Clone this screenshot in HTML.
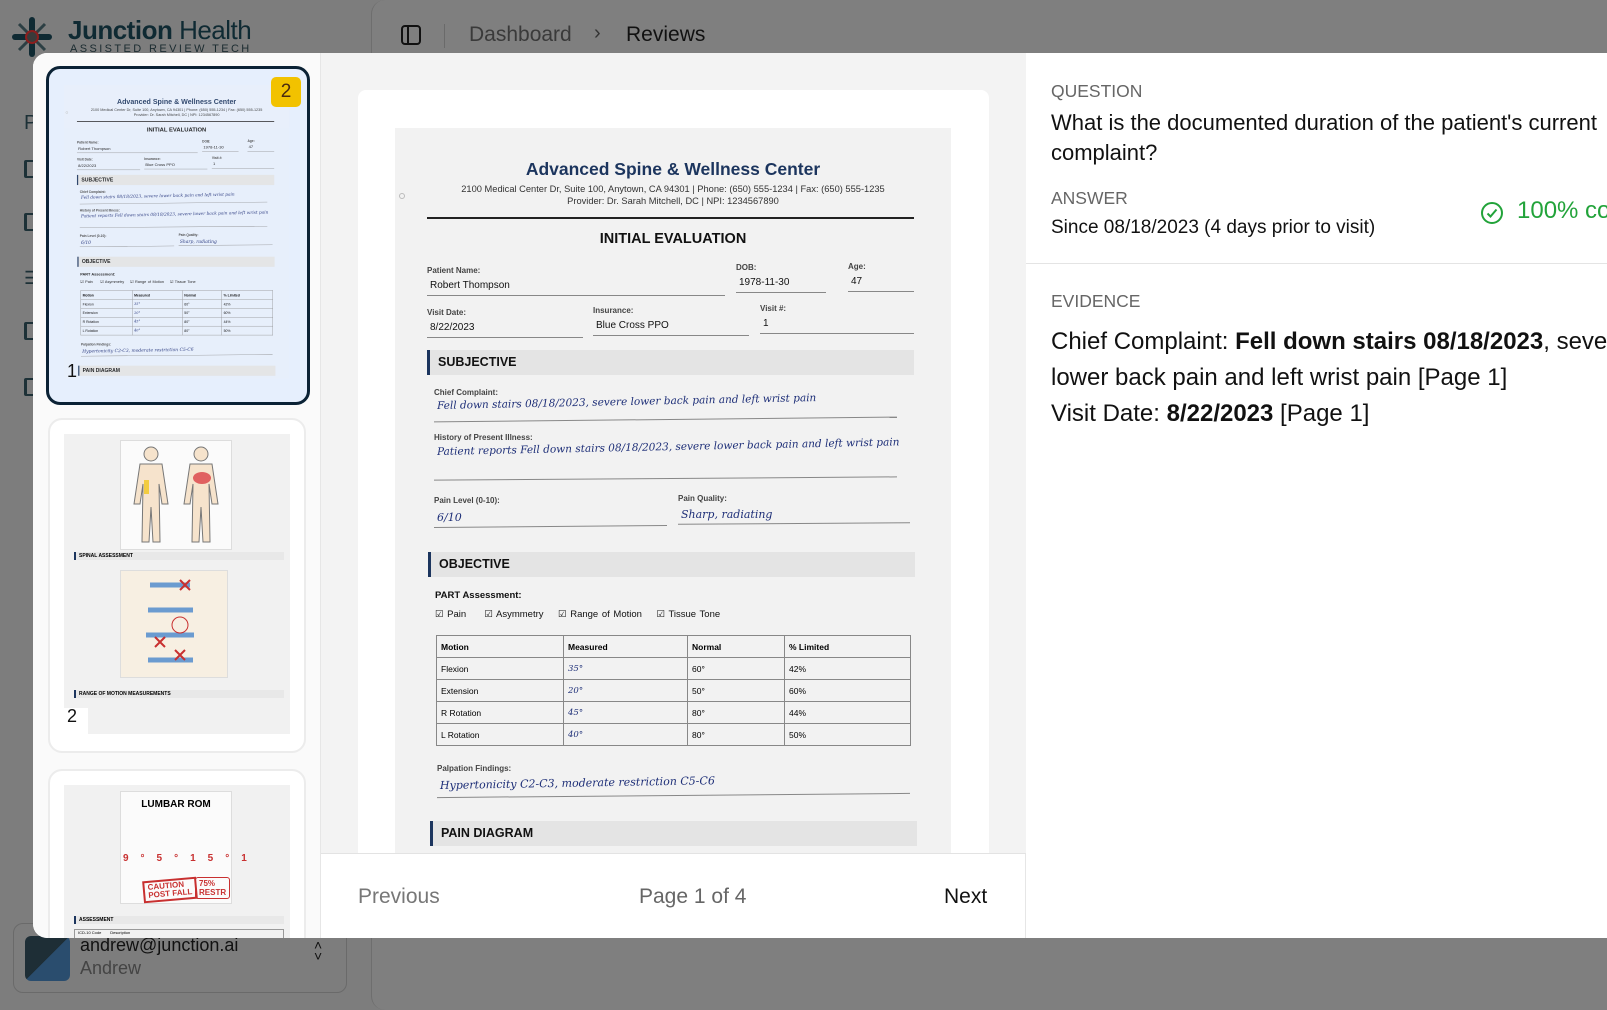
<!DOCTYPE html>
<html><head><meta charset="utf-8"><style>
*{box-sizing:border-box;margin:0;padding:0}
body{width:1607px;height:1002px;overflow:hidden;background:#7d7d7d;font-family:"Liberation Sans",Arial,sans-serif;position:relative}
.abs{position:absolute}
.hw{font-family:"DejaVu Serif",serif;font-style:italic;color:#1e2f78;white-space:nowrap}
.lbl{font-size:8px;font-weight:bold;color:#444;white-space:nowrap}
.val{font-size:10px;color:#111;white-space:nowrap}
.ln{height:1px;background:#888}
.bar{background:#e4e4e4;border-left:3px solid #1c355e;font-weight:bold;font-size:12.5px;padding-left:8px;line-height:25px;color:#111}
.scan{position:absolute;width:556px;height:725px;background:#f2f2f2;overflow:hidden}
table{border-collapse:collapse;font-size:8.5px}
td{border:1px solid #888;height:22px;padding:0 4px;vertical-align:middle}
.si{position:absolute;left:24px;width:12px;height:18px;border:2px solid #1d3137;border-radius:2px;border-left-width:3px}
</style></head><body>
<!-- background app -->
<div class="abs" style="left:371px;top:0;width:1300px;height:1010px;border-left:1px solid #6e6e6e;border-radius:14px;background:#7f7f7f"></div>
<svg class="abs" style="left:12px;top:17px" width="40" height="40" viewBox="0 0 40 40">
<g stroke="#0f2a33" stroke-width="6" stroke-linecap="round"><line x1="20" y1="3" x2="20" y2="37"/><line x1="3" y1="20" x2="37" y2="20"/></g>
<g stroke="#2c3f44" stroke-width="3"><line x1="7" y1="7" x2="33" y2="33"/><line x1="33" y1="7" x2="7" y2="33"/></g>
<circle cx="20" cy="20" r="6" fill="#3a3a3a" stroke="#8b1e1e" stroke-width="2"/></svg>
<div class="abs" style="left:68px;top:15px;font-size:26px;font-weight:bold;color:#0f2a33;letter-spacing:-0.5px">Junction<span style="font-weight:normal"> Health</span></div>
<div class="abs" style="left:70px;top:43px;font-size:11px;color:#1b2b30;letter-spacing:2.4px">ASSISTED REVIEW TECH</div>
<div class="abs" style="left:24px;top:112px;font-size:20px;color:#1d3137">P</div>
<div class="si" style="top:160px"></div><div class="si" style="top:213px"></div><div class="si" style="top:322px"></div><div class="si" style="top:378px"></div>
<div class="abs" style="left:24px;top:268px;font-size:18px;color:#1d3137">☰</div>
<svg class="abs" style="left:400px;top:24px" width="22" height="22" viewBox="0 0 22 22" fill="none" stroke="#111" stroke-width="2"><rect x="2" y="2" width="18" height="18" rx="3"/><line x1="8" y1="2" x2="8" y2="20"/></svg>
<div class="abs" style="left:444px;top:24px;width:1px;height:24px;background:#6a6a6a"></div>
<div class="abs" style="left:469px;top:23px;font-size:21px;color:#3a3a3a">Dashboard</div>
<div class="abs" style="left:594px;top:22px;font-size:20px;color:#333">›</div>
<div class="abs" style="left:626px;top:23px;font-size:21px;color:#111">Reviews</div>
<div class="abs" style="left:13px;top:923px;width:334px;height:70px;border:1px solid #6a6a6a;border-radius:10px"></div>
<div class="abs" style="left:25px;top:936px;width:45px;height:45px;border-radius:6px;background:linear-gradient(135deg,#1e2e36 50%,#2a4d6e 50%)"></div>
<div class="abs" style="left:80px;top:935px;font-size:18px;color:#111">andrew@junction.ai</div>
<div class="abs" style="left:80px;top:958px;font-size:18px;color:#444">Andrew</div>
<div class="abs" style="left:314px;top:940px;font-size:14px;color:#111;line-height:11px">˄<br>˅</div>

<!-- modal -->
<div class="abs" style="left:33px;top:53px;width:1600px;height:885px;background:#fff;border-radius:14px;overflow:hidden">
 <div class="abs" style="left:0;top:0;width:288px;height:885px;background:#fafafa;border-right:1px solid #e6e6e6"></div>
 <div class="abs" style="left:288px;top:0;width:705px;height:800px;background:#f3f3f3"></div>
 <div class="abs" style="left:325px;top:37px;width:631px;height:780px;background:#fff;border-radius:8px"></div>
 <div class="abs" style="left:288px;top:800px;width:705px;height:85px;background:#fff;border-top:1px solid #e3e3e3;border-right:1px solid #e6e6e6"></div>
 <div class="abs" style="left:325px;top:832px;font-size:21px;color:#777">Previous</div>
 <div class="abs" style="left:606px;top:832px;font-size:21px;color:#666">Page 1 of 4</div>
 <div class="abs" style="left:911px;top:832px;font-size:21px;color:#111">Next</div>
 <div class="abs" style="left:993px;top:210px;width:700px;height:1px;background:#e4e4e4"></div>
 <div class="abs" style="left:1018px;top:28px;font-size:17.5px;color:#666">QUESTION</div>
 <div class="abs" style="left:1018px;top:55px;font-size:22px;color:#111;line-height:30px;white-space:nowrap">What is the documented duration of the patient's current<br>complaint?</div>
 <div class="abs" style="left:1018px;top:135px;font-size:17.5px;color:#666">ANSWER</div>
 <div class="abs" style="left:1018px;top:164px;font-size:19px;color:#111">Since 08/18/2023 (4 days prior to visit)</div>
 <svg class="abs" style="left:1447px;top:148px" width="24" height="24" viewBox="0 0 24 24" fill="none" stroke="#22a33a" stroke-width="2"><circle cx="12" cy="12" r="10"/><path d="M7.5 12.5l3 3 6-7"/></svg>
 <div class="abs" style="left:1484px;top:144px;font-size:24px;color:#22a33a;white-space:nowrap">100% confidence</div>
 <div class="abs" style="left:1018px;top:238px;font-size:17.5px;color:#666">EVIDENCE</div>
 <div class="abs" style="left:1018px;top:271px;font-size:24px;color:#111;line-height:36px;white-space:nowrap">Chief Complaint: <b>Fell down stairs 08/18/2023</b>, severe<br>lower back pain and left wrist pain [Page 1]<br>Visit Date: <b>8/22/2023</b> [Page 1]</div>
</div>

<!-- main scan -->
<div id="scan" class="scan" style="left:395px;top:128px">
 <div class="abs" style="left:0;top:31px;width:556px;text-align:center;font-size:17.5px;font-weight:bold;color:#1c355e">Advanced Spine &amp; Wellness Center</div>
 <div class="abs" style="left:0;top:55px;width:556px;text-align:center;font-size:9.3px;color:#333;line-height:12px">2100 Medical Center Dr, Suite 100, Anytown, CA 94301 | Phone: (650) 555-1234 | Fax: (650) 555-1235<br>Provider: Dr. Sarah Mitchell, DC | NPI: 1234567890</div>
 <div class="abs" style="left:4px;top:65px;width:6px;height:6px;border:1px solid #bbb;border-radius:50%"></div>
 <div class="abs" style="left:32px;top:89px;width:487px;height:2px;background:#222"></div>
 <div class="abs" style="left:0;top:103px;width:556px;text-align:center;font-size:14.5px;font-weight:bold;color:#111">INITIAL EVALUATION</div>
 <div class="abs lbl" style="left:32px;top:138px">Patient Name:</div>
 <div class="abs val" style="left:35px;top:152px">Robert Thompson</div>
 <div class="abs ln" style="left:32px;top:167px;width:298px"></div>
 <div class="abs lbl" style="left:341px;top:135px">DOB:</div>
 <div class="abs val" style="left:344px;top:149px">1978-11-30</div>
 <div class="abs ln" style="left:341px;top:164px;width:90px"></div>
 <div class="abs lbl" style="left:453px;top:134px">Age:</div>
 <div class="abs val" style="left:456px;top:148px">47</div>
 <div class="abs ln" style="left:453px;top:163px;width:66px"></div>
 <div class="abs lbl" style="left:32px;top:180px">Visit Date:</div>
 <div class="abs val" style="left:35px;top:194px">8/22/2023</div>
 <div class="abs ln" style="left:32px;top:209px;width:156px"></div>
 <div class="abs lbl" style="left:198px;top:178px">Insurance:</div>
 <div class="abs val" style="left:201px;top:192px">Blue Cross PPO</div>
 <div class="abs ln" style="left:198px;top:207px;width:156px"></div>
 <div class="abs lbl" style="left:365px;top:176px">Visit #:</div>
 <div class="abs val" style="left:368px;top:190px">1</div>
 <div class="abs ln" style="left:365px;top:205px;width:154px"></div>
 <div class="abs bar" style="left:32px;top:222px;width:487px">SUBJECTIVE</div>
 <div class="abs lbl" style="left:39px;top:260px">Chief Complaint:</div>
 <div class="abs hw" style="left:42px;top:272px;font-size:10.5px;transform:rotate(-1.2deg);transform-origin:left">Fell down stairs 08/18/2023, severe lower back pain and left wrist pain</div>
 <div class="abs ln" style="left:39px;top:291px;width:463px;transform:rotate(-0.6deg)"></div>
 <div class="abs lbl" style="left:39px;top:305px">History of Present Illness:</div>
 <div class="abs hw" style="left:42px;top:318px;font-size:10.5px;transform:rotate(-1.2deg);transform-origin:left">Patient reports Fell down stairs 08/18/2023, severe lower back pain and left wrist pain</div>
 <div class="abs ln" style="left:39px;top:350px;width:463px;transform:rotate(-0.4deg)"></div>
 <div class="abs lbl" style="left:39px;top:368px">Pain Level (0-10):</div>
 <div class="abs hw" style="left:42px;top:383px;font-size:11px">6/10</div>
 <div class="abs ln" style="left:39px;top:398px;width:233px;transform:rotate(-0.5deg)"></div>
 <div class="abs lbl" style="left:283px;top:366px">Pain Quality:</div>
 <div class="abs hw" style="left:286px;top:380px;font-size:11px">Sharp, radiating</div>
 <div class="abs ln" style="left:283px;top:395px;width:232px;transform:rotate(-0.4deg)"></div>
 <div class="abs bar" style="left:33px;top:424px;width:487px">OBJECTIVE</div>
 <div class="abs" style="left:40px;top:462px;font-size:9.5px;font-weight:bold;color:#111">PART Assessment:</div>
 <div class="abs" style="left:40px;top:481px;font-size:9.5px;color:#111;white-space:nowrap;word-spacing:1px">☑ Pain &nbsp;&nbsp;&nbsp;&nbsp;☑ Asymmetry &nbsp;&nbsp;&nbsp;☑ Range of Motion &nbsp;&nbsp;&nbsp;☑ Tissue Tone</div>
 <table class="abs" style="left:41px;top:507px;width:475px">
  <tr style="font-weight:bold"><td style="width:127px">Motion</td><td style="width:124px">Measured</td><td style="width:97px">Normal</td><td>% Limited</td></tr>
  <tr><td>Flexion</td><td class="hw">35°</td><td>60°</td><td>42%</td></tr>
  <tr><td>Extension</td><td class="hw">20°</td><td>50°</td><td>60%</td></tr>
  <tr><td>R Rotation</td><td class="hw">45°</td><td>80°</td><td>44%</td></tr>
  <tr><td>L Rotation</td><td class="hw">40°</td><td>80°</td><td>50%</td></tr>
 </table>
 <div class="abs lbl" style="left:42px;top:636px">Palpation Findings:</div>
 <div class="abs hw" style="left:45px;top:651px;font-size:11px;transform:rotate(-1deg);transform-origin:left">Hypertonicity C2-C3, moderate restriction C5-C6</div>
 <div class="abs ln" style="left:42px;top:667px;width:473px;transform:rotate(-0.5deg)"></div>
 <div class="abs bar" style="left:35px;top:693px;width:487px">PAIN DIAGRAM</div>
</div>

<!-- thumbnails -->
<div class="abs" style="left:46px;top:66px;width:264px;height:339px;border:3px solid #0b2235;border-radius:14px;background:#e6effd;overflow:hidden">
 <div id="t1" style="position:absolute;left:15px;top:16px;width:556px;height:725px;transform:scale(0.405);transform-origin:0 0;opacity:0.9"></div>
 <div class="abs" style="left:222px;top:8px;width:30px;height:30px;border-radius:5px;background:#f2c200;text-align:center;font-size:19px;line-height:30px;color:#4a2a10">2</div>
 <div class="abs" style="left:18px;top:292px;font-size:18px;color:#111">1</div>
</div>
<div class="abs" style="left:48px;top:418px;width:258px;height:335px;border:2px solid #ececec;border-radius:14px;background:#fff;overflow:hidden">
 <div class="abs" style="left:14px;top:14px;width:226px;height:300px;background:#f1f1f1"></div>
 <div class="abs" style="left:70px;top:20px;width:112px;height:110px;background:#fbfbfb;border:1px solid #ddd"></div>
 <svg class="abs" style="left:76px;top:24px" width="100" height="102" viewBox="0 0 100 102" fill="#f6e3cc" stroke="#777" stroke-width="1"><circle cx="25" cy="10" r="7"/><path d="M14 20h22l6 40h-6l-3-20 1 58h-7l-2-35-2 35h-7l1-58-3 20h-6z"/><circle cx="75" cy="10" r="7"/><path d="M64 20h22l6 40h-6l-3-20 1 58h-7l-2-35-2 35h-7l1-58-3 20h-6z"/><ellipse cx="76" cy="34" rx="9" ry="6" fill="#e06060" stroke="none"/><rect x="18" y="36" width="5" height="14" fill="#f2cc40" stroke="none"/></svg>
 <div class="abs" style="left:24px;top:132px;width:210px;height:8px;border-left:2px solid #1c355e;background:#e8e8e8;font-size:5px;font-weight:bold;padding-left:3px;line-height:8px">SPINAL ASSESSMENT</div>
 <div class="abs" style="left:70px;top:150px;width:108px;height:108px;background:#f7efe2;border:1px solid #ddd"></div>
 <svg class="abs" style="left:80px;top:155px" width="90" height="100" viewBox="0 0 90 100" stroke="#555" fill="none"><path d="M20 10h40M18 35h45M16 60h48M18 85h45" stroke="#6b9bd0" stroke-width="5"/><path d="M50 5l10 10M60 5l-10 10M25 62l10 10M35 62l-10 10M45 75l10 10M55 75l-10 10" stroke="#c83030" stroke-width="2"/><circle cx="50" cy="50" r="8" stroke="#c83030"/></svg>
 <div class="abs" style="left:24px;top:270px;width:210px;height:8px;border-left:2px solid #1c355e;background:#e8e8e8;font-size:5px;font-weight:bold;padding-left:3px;line-height:8px">RANGE OF MOTION MEASUREMENTS</div>
 <div class="abs" style="left:14px;top:288px;width:24px;height:26px;background:#fff"></div>
 <div class="abs" style="left:17px;top:286px;font-size:18px;color:#111">2</div>
</div>
<div class="abs" style="left:48px;top:769px;width:258px;height:200px;border:2px solid #ececec;border-radius:14px;background:#fff;overflow:hidden;clip-path:inset(0 0 31px 0)">
 <div class="abs" style="left:14px;top:14px;width:226px;height:200px;background:#f1f1f1"></div>
 <div class="abs" style="left:70px;top:20px;width:112px;height:113px;background:#fbfbfb;border:1px solid #ddd"></div>
 <div class="abs" style="left:70px;top:28px;width:112px;text-align:center;font-size:10px;font-weight:bold">LUMBAR ROM</div>
 <div class="abs" style="left:73px;top:82px;font-size:10px;color:#c83030;font-weight:bold;letter-spacing:12px">9°5°15°1</div>
 <div class="abs" style="left:93px;top:108px;border:2px solid #c83030;color:#c83030;font-size:8px;font-weight:bold;padding:1px 3px;transform:rotate(-5deg);line-height:8px">CAUTION<br>POST FALL</div>
 <div class="abs" style="left:145px;top:106px;border:1px solid #c83030;color:#c83030;font-size:8px;font-weight:bold;padding:1px 3px;border-radius:3px;line-height:9px">75%<br>RESTR</div>
 <div class="abs" style="left:24px;top:145px;width:210px;height:8px;border-left:2px solid #1c355e;background:#e8e8e8;font-size:5px;font-weight:bold;padding-left:3px;line-height:8px">ASSESSMENT</div>
 <div class="abs" style="left:24px;top:158px;width:210px;height:10px;border:1px solid #999;font-size:4px;padding-left:3px">ICD-10 Code &nbsp;&nbsp;&nbsp;&nbsp;&nbsp;&nbsp; Description</div>
</div>
<script>document.getElementById('t1').innerHTML=document.getElementById('scan').innerHTML;document.getElementById('t1').style.background='#e8effb';</script>
</body></html>
